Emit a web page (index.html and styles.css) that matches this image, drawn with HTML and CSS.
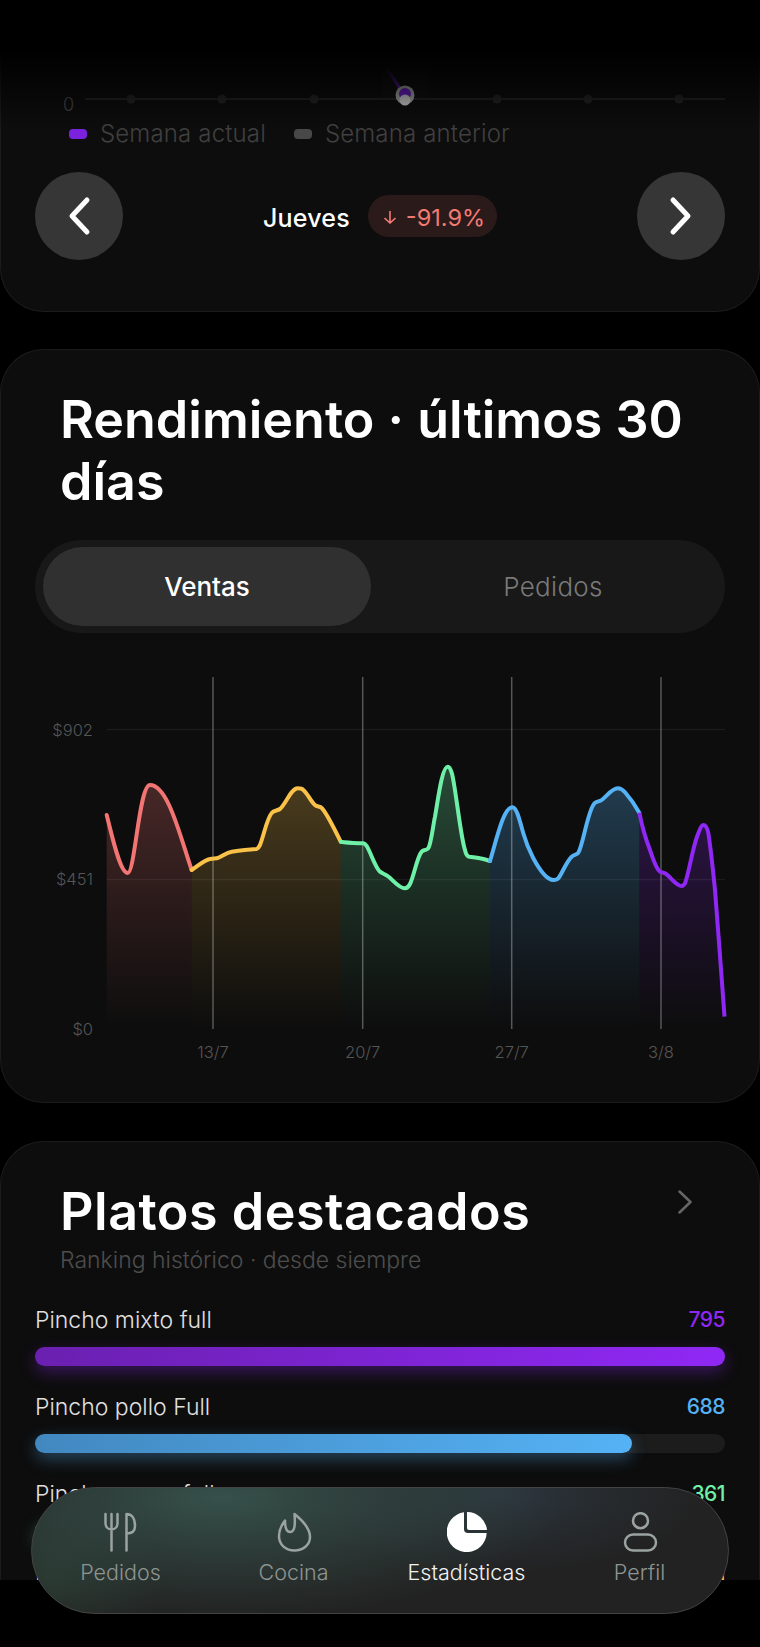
FILE: index.html
```html
<!DOCTYPE html>
<html lang="es">
<head>
  <meta charset="UTF-8">
  <meta name="viewport" content="width=device-width, initial-scale=1.0">
  <title>Estadísticas</title>
  <link rel="stylesheet" href="styles.css">
</head>
<body>
  <div class="screen">
    <section class="card card-week">
      <svg class="week-chart" viewBox="0 0 760 120" width="760" height="120">
        <defs>
          <linearGradient id="peakFade" x1="0" y1="0" x2="0" y2="1">
            <stop offset="0" stop-color="#6a20d0" stop-opacity="0"/>
            <stop offset="1" stop-color="#6a20d0"/>
          </linearGradient>
        </defs>
        <rect x="382" y="68" width="46" height="31" fill="#fff" opacity="0.015"/>
        <line x1="85" y1="99" x2="725" y2="99" stroke="#222" stroke-width="2"/>
        <g fill="#242424">
          <circle cx="131" cy="99" r="4.5"/>
          <circle cx="222" cy="99" r="4.5"/>
          <circle cx="314" cy="99" r="4.5"/>
          <circle cx="497" cy="99" r="4.5"/>
          <circle cx="588" cy="99" r="4.5"/>
          <circle cx="679" cy="99" r="4.5"/>
        </g>
        <path d="M386 67 L403 93" stroke="url(#peakFade)" stroke-width="3" fill="none"/>
        <circle cx="405" cy="95" r="9.5" fill="#a8a8a8"/>
        <circle cx="405" cy="94" r="6" fill="#6a20c8"/>
        <circle cx="405" cy="100" r="5.5" fill="#d0d0d0"/>
        <text class="week-zero" x="63" y="111">0</text>
      </svg>
      <div class="legend">
        <span class="legend-item"><i class="swatch swatch-now"></i>Semana actual</span>
        <span class="legend-item"><i class="swatch swatch-prev"></i>Semana anterior</span>
      </div>
      <div class="day-controls">
        <button class="round-btn">
          <svg viewBox="0 0 24 40" width="24" height="40"><path d="M20 4 L5 20 L20 36" /></svg>
        </button>
        <div class="day-info">
          <span class="day-name">Jueves</span>
          <span class="delta-pill">
            <svg viewBox="0 0 14 14" width="14" height="14"><path d="M7 1 V13 M1.5 8 L7 13 L12.5 8"/></svg>
            -91.9%
          </span>
        </div>
        <button class="round-btn">
          <svg viewBox="0 0 24 40" width="24" height="40"><path d="M4 4 L19 20 L4 36" /></svg>
        </button>
      </div>
    </section>

    <section class="card card-perf">
      <h2 class="card-title">Rendimiento · últimos 30 días</h2>
      <div class="toggle">
        <div class="toggle-btn active">Ventas</div>
        <div class="toggle-btn">Pedidos</div>
      </div>
      <svg class="sales-chart" viewBox="0 665 760 410" width="760" height="410">
        <defs>
          <linearGradient id="fadeRed" x1="0" y1="770" x2="0" y2="1029" gradientUnits="userSpaceOnUse">
            <stop offset="0" stop-color="#f27573" stop-opacity="0.27"/>
            <stop offset="1" stop-color="#f27573" stop-opacity="0"/>
          </linearGradient>
          <linearGradient id="fadeYellow" x1="0" y1="770" x2="0" y2="1029" gradientUnits="userSpaceOnUse">
            <stop offset="0" stop-color="#fbc24a" stop-opacity="0.27"/>
            <stop offset="1" stop-color="#fbc24a" stop-opacity="0"/>
          </linearGradient>
          <linearGradient id="fadeGreen" x1="0" y1="770" x2="0" y2="1029" gradientUnits="userSpaceOnUse">
            <stop offset="0" stop-color="#6ff0a8" stop-opacity="0.27"/>
            <stop offset="1" stop-color="#6ff0a8" stop-opacity="0"/>
          </linearGradient>
          <linearGradient id="fadeBlue" x1="0" y1="770" x2="0" y2="1029" gradientUnits="userSpaceOnUse">
            <stop offset="0" stop-color="#55b2f5" stop-opacity="0.3"/>
            <stop offset="1" stop-color="#55b2f5" stop-opacity="0"/>
          </linearGradient>
          <linearGradient id="fadePurple" x1="0" y1="770" x2="0" y2="1029" gradientUnits="userSpaceOnUse">
            <stop offset="0" stop-color="#9028f5" stop-opacity="0.28"/>
            <stop offset="1" stop-color="#9028f5" stop-opacity="0"/>
          </linearGradient>
        </defs>

        <!-- areas -->
        <path fill="url(#fadeRed)" d="M106.7 815 C112 836 120 873 127.7 873 C135 873 139 785 150 785 C168 785 180 836 191.7 870 V1029 H106.7 Z"/>
        <path fill="url(#fadeYellow)" d="M191.7 870 C198 866 204 860 210 859 C214 858 216 859 218.3 857.7 C224 855 227 852.5 231.7 851.7 C240 850.5 248 849.5 256.7 849 C258 848.5 259 847 260 845 C264 835 267 818 271.7 813 C274 810 277 811 280 809 C286 804 291 788.3 297.7 788.3 C300 788.3 302 788.5 303.3 790 C308 794 311 802 315 805 C317 807 320 806 321.7 808 C326 812 333 826 340.7 841.7 V1029 H191.7 Z"/>
        <path fill="url(#fadeGreen)" d="M340.7 841.7 C348 843 356 843 363.3 843.3 C365 843.5 366 845 366.7 846 C371 853 375 867 380 871.7 C383 874 385 874 388.3 876.5 C393 880 399 888.3 405 888.3 C407 888.3 409 886 410 884 C414 876 417 857 421.7 851.7 C424 849 426 851 428.3 848.3 C431 844 433 826 435 816.7 C438 800 442 766.7 447.7 766.7 C450 766.7 452 772 453.3 780 C457 800 461 838 465 850 C466 855 467 856.3 469.3 856.7 C473 857 476 857.3 480 858.3 C484 859 487 860 490 861 V1029 H340.7 Z"/>
        <path fill="url(#fadeBlue)" d="M490 861 C496 842 503 807.3 512.3 807.3 C517 807.3 520 822 523.3 833.3 C526 843 530 852 533.3 858.3 C538 867 546 880 553.3 880 C555 880 557 880 558.3 878.3 C562 874 566 862 571.7 856.7 C574 854 577 855 578.3 852.7 C583 845 587 815 593.3 805 C595 801 599 802 601.7 800 C607 796 612 788.3 617.7 788.3 C620 788.3 623 790 625 792.3 C630 798 635 805 639.3 812.7 V1029 H490 Z"/>
        <path fill="url(#fadePurple)" d="M639.3 812.7 C642 826 646 840 650 850 C653 859 656 869 660 871.7 C662 873 663 872 665 873.3 C670 876 676 886 681.7 886 C683 886 684 885 685 883.3 C689 873 693 845 698.3 833.3 C700 829 701.5 825 703.3 825 C705.5 825 707 827 708.3 833 C711 850 713 870 715 890 C718 930 722 980 725 1016.7 V1029 H639.3 Z"/>

        <!-- grid -->
        <g stroke="#fff" stroke-opacity="0.06" stroke-width="1.5">
          <line x1="106.7" y1="729.5" x2="725" y2="729.5"/>
          <line x1="106.7" y1="879.5" x2="725" y2="879.5"/>
        </g>
        <g stroke="#fff" stroke-opacity="0.3" stroke-width="1.5">
          <line x1="213" y1="677" x2="213" y2="1029"/>
          <line x1="362.7" y1="677" x2="362.7" y2="1029"/>
          <line x1="511.7" y1="677" x2="511.7" y2="1029"/>
          <line x1="661" y1="677" x2="661" y2="1029"/>
        </g>

        <!-- lines -->
        <g fill="none" stroke-width="4" stroke-linecap="round" stroke-linejoin="round">
          <path stroke="#f27573" d="M106.7 815 C112 836 120 873 127.7 873 C135 873 139 785 150 785 C168 785 180 836 191.7 870"/>
          <path stroke="#fbc24a" d="M191.7 870 C198 866 204 860 210 859 C214 858 216 859 218.3 857.7 C224 855 227 852.5 231.7 851.7 C240 850.5 248 849.5 256.7 849 C258 848.5 259 847 260 845 C264 835 267 818 271.7 813 C274 810 277 811 280 809 C286 804 291 788.3 297.7 788.3 C300 788.3 302 788.5 303.3 790 C308 794 311 802 315 805 C317 807 320 806 321.7 808 C326 812 333 826 340.7 841.7"/>
          <path stroke="#6ff0a8" d="M340.7 841.7 C348 843 356 843 363.3 843.3 C365 843.5 366 845 366.7 846 C371 853 375 867 380 871.7 C383 874 385 874 388.3 876.5 C393 880 399 888.3 405 888.3 C407 888.3 409 886 410 884 C414 876 417 857 421.7 851.7 C424 849 426 851 428.3 848.3 C431 844 433 826 435 816.7 C438 800 442 766.7 447.7 766.7 C450 766.7 452 772 453.3 780 C457 800 461 838 465 850 C466 855 467 856.3 469.3 856.7 C473 857 476 857.3 480 858.3 C484 859 487 860 490 861"/>
          <path stroke="#55b2f5" d="M490 861 C496 842 503 807.3 512.3 807.3 C517 807.3 520 822 523.3 833.3 C526 843 530 852 533.3 858.3 C538 867 546 880 553.3 880 C555 880 557 880 558.3 878.3 C562 874 566 862 571.7 856.7 C574 854 577 855 578.3 852.7 C583 845 587 815 593.3 805 C595 801 599 802 601.7 800 C607 796 612 788.3 617.7 788.3 C620 788.3 623 790 625 792.3 C630 798 635 805 639.3 812.7"/>
          <path stroke="#9028f5" stroke-linecap="butt" d="M639.3 812.7 C642 826 646 840 650 850 C653 859 656 869 660 871.7 C662 873 663 872 665 873.3 C670 876 676 886 681.7 886 C683 886 684 885 685 883.3 C689 873 693 845 698.3 833.3 C700 829 701.5 825 703.3 825 C705.5 825 707 827 708.3 833 C711 850 713 870 715 890 C718 930 722 980 724.5 1016.7"/>
        </g>

        <!-- labels -->
        <g class="axis-label">
          <text x="93" y="736" text-anchor="end">$902</text>
          <text x="93" y="885" text-anchor="end">$451</text>
          <text x="93" y="1035" text-anchor="end">$0</text>
          <text x="213" y="1058" text-anchor="middle">13/7</text>
          <text x="362.7" y="1058" text-anchor="middle">20/7</text>
          <text x="511.7" y="1058" text-anchor="middle">27/7</text>
          <text x="661" y="1058" text-anchor="middle">3/8</text>
        </g>
      </svg>
    </section>

    <section class="card card-top">
      <div class="top-head">
        <div>
          <h2 class="card-title">Platos destacados</h2>
          <p class="top-sub">Ranking histórico · desde siempre</p>
        </div>
        <svg class="top-chevron" viewBox="0 0 14 24" width="14" height="24"><path d="M1.5 1.5 L12.5 12 L1.5 22.5"/></svg>
      </div>
      <div class="dish">
        <div class="dish-row"><span>Pincho mixto full</span><b class="c-purple">795</b></div>
        <div class="track"><div class="fill fill-purple" style="width: 100%"></div></div>
      </div>
      <div class="dish">
        <div class="dish-row"><span>Pincho pollo Full</span><b class="c-blue">688</b></div>
        <div class="track"><div class="fill fill-blue" style="width: 86.5%"></div></div>
      </div>
      <div class="dish">
        <div class="dish-row"><span>Pincho carne full</span><b class="c-green">361</b></div>
        <div class="track"><div class="fill fill-green" style="width: 45.4%"></div></div>
      </div>
      <div class="dish">
        <div class="dish-row"><span>Lomito full</span><b class="c-yellow">311</b></div>
      </div>
    </section>
    <div class="top-fade"></div>
  </div>

  <nav class="tabbar">
    <div class="tab">
      <svg viewBox="0 0 40 40" width="40" height="40"><path d="M4.5 2 V11 C4.5 15 7 17.5 10.5 17.5 C14 17.5 16.5 15 16.5 11 V2 M10.5 2 V38.5 M25.5 38.5 V2 C30 2 34 5.5 34 14 C34 19.5 31 21.5 25.5 21.5"/></svg>
      <span>Pedidos</span>
    </div>
    <div class="tab">
      <svg viewBox="0 0 40 40" width="40" height="40"><path d="M20.5 2 C28 8 36 16 36 25 C36 33 29 38.5 20.5 38.5 C12 38.5 5 33 5 24 C5 18 7.5 13 11 8.5 C11 14 12 20 16 20 C20.5 20 21.5 14 20.5 2 Z"/></svg>
      <span>Cocina</span>
    </div>
    <div class="tab active">
      <svg viewBox="0 0 40 40" width="40" height="40"><path class="solid" d="M17 0.3 V17 a4 4 0 0 0 4 4 H39.7 A20 20 0 1 1 17 0.3 Z"/><path class="solid" d="M20 0 A20 20 0 0 1 40 18 H22 a2 2 0 0 1 -2 -2 Z"/></svg>
      <span>Estadísticas</span>
    </div>
    <div class="tab">
      <svg viewBox="0 0 40 40" width="40" height="40"><circle cx="20.5" cy="8.7" r="7.5"/><rect x="5" y="22.5" width="31" height="16" rx="8"/></svg>
      <span>Perfil</span>
    </div>
  </nav>
</body>
</html>
```

FILE: styles.css
```css
* {
  margin: 0;
  padding: 0;
  box-sizing: border-box;
}

body {
  font-family: 'Inter', 'Liberation Sans', sans-serif;
  font-weight: 300;
  background: #000;
  color: #fff;
  width: 760px;
  height: 1647px;
  overflow: hidden;
  position: relative;
}

.screen {
  height: 1580px;
  overflow: hidden;
  position: relative;
  display: flex;
  flex-direction: column;
  gap: 37px;
}

.card {
  flex: none;
  background: #0d0d0d;
  border-radius: 44px;
  box-shadow: inset 0 0 0 1px #1b1b1b;
}

.top-fade {
  position: absolute;
  top: 0;
  left: 0;
  right: 0;
  height: 130px;
  background: linear-gradient(#000 0, #000 50px, rgba(0, 0, 0, 0) 130px);
}

/* week card */
.card-week {
  height: 312px;
  border-radius: 0 0 44px 44px;
}

.week-chart {
  display: block;
}

.week-zero {
  font-size: 18px;
  fill: #4a4a4a;
}

.legend {
  display: flex;
  gap: 28px;
  padding-left: 69px;
  font-size: 24px;
  letter-spacing: 0.15px;
  line-height: 28px;
  color: #404040;
}

.legend-item {
  display: flex;
  align-items: center;
  gap: 13px;
}

.swatch {
  width: 18px;
  height: 10px;
  border-radius: 4px;
}

.swatch-now {
  background: #7b22dc;
}

.swatch-prev {
  background: #484848;
}

.day-controls {
  display: flex;
  align-items: center;
  justify-content: space-between;
  margin-top: 24px;
  padding: 0 35px;
}

.round-btn {
  width: 88px;
  height: 88px;
  border: none;
  border-radius: 50%;
  background: #363636;
  display: flex;
  align-items: center;
  justify-content: center;
}

.round-btn path {
  fill: none;
  stroke: #fff;
  stroke-width: 5;
  stroke-linecap: round;
  stroke-linejoin: round;
}

.day-info {
  display: flex;
  align-items: center;
  gap: 18px;
}

.day-name {
  padding-top: 3px;
  font-size: 25px;
  font-weight: 500;
  letter-spacing: 0.2px;
}

.delta-pill {
  display: flex;
  align-items: center;
  gap: 9px;
  height: 42px;
  padding: 2px 12px 0 15px;
  border-radius: 21px;
  background: #2b1a1a;
  color: #f27b74;
  font-size: 23.5px;
  font-weight: 400;
}

.delta-pill path {
  fill: none;
  stroke: #f27b74;
  stroke-width: 1.6;
}

/* titles */
.card-title {
  font-size: 52px;
  font-weight: 600;
  line-height: 62px;
}

/* performance card */
.card-perf {
  height: 754px;
  margin-bottom: 1px;
  padding-top: 40px;
}

.card-perf .card-title {
  padding: 0 60px;
}

.toggle {
  display: flex;
  gap: 18px;
  height: 93px;
  margin: 27px 35px 0;
  padding: 7px 8px;
  border-radius: 47px;
  background: #181818;
}

.toggle-btn {
  flex: 1;
  display: flex;
  align-items: center;
  justify-content: center;
  border-radius: 40px;
  font-size: 26px;
  letter-spacing: 0.3px;
  color: #7a7a7a;
}

.toggle-btn.active {
  background: #303030;
  color: #fff;
  font-weight: 500;
  letter-spacing: 0;
}

.sales-chart {
  display: block;
  margin-top: 32px;
}

.axis-label {
  font-size: 16.5px;
  fill: #555;
}

/* ranking card */
.card-top {
  height: 500px;
  padding: 40px 35px 0;
}

.top-head {
  display: flex;
  justify-content: space-between;
  align-items: flex-start;
  padding: 0 33px 0 25px;
}

.card-top .card-title {
  letter-spacing: 0.5px;
}

.top-sub {
  margin-top: 3px;
  font-size: 23px;
  line-height: 28px;
  color: #4d4d4d;
}

.top-chevron {
  margin-top: 9px;
}

.top-chevron path {
  fill: none;
  stroke: #666;
  stroke-width: 2.5;
  stroke-linecap: round;
  stroke-linejoin: round;
}

.dish {
  margin-top: 27px;
}

.top-head + .dish {
  margin-top: 32px;
}

.dish-row {
  display: flex;
  justify-content: space-between;
  font-size: 23px;
  line-height: 28px;
  color: #e0e0e0;
}

.dish-row b {
  font-size: 21px;
  font-weight: 500;
  letter-spacing: -0.5px;
}

.c-purple { color: #9028f5; }
.c-blue { color: #55b2f5; }
.c-green { color: #6ff0a8; }
.c-yellow { color: #fbc24a; }

.track {
  height: 19px;
  margin-top: 13px;
  border-radius: 10px;
  background: #1c1c1c;
}

.fill {
  height: 100%;
  border-radius: 10px;
}

.fill-purple {
  background: linear-gradient(90deg, #6a20b0, #9028f5);
  box-shadow: 0 6px 16px rgba(144, 40, 245, 0.35);
}

.fill-blue {
  background: linear-gradient(90deg, #4288c0, #55b2f5);
  box-shadow: 0 6px 16px rgba(85, 178, 245, 0.35);
}

.fill-green {
  background: linear-gradient(90deg, #4fb57e, #6ff0a8);
  box-shadow: 0 6px 16px rgba(111, 240, 168, 0.35);
}

/* bottom nav */
.tabbar {
  position: absolute;
  left: 31px;
  top: 1487px;
  width: 698px;
  height: 127px;
  padding: 24px 2px 0;
  display: grid;
  grid-template-columns: repeat(4, 1fr);
  border: 1.5px solid #434343;
  border-radius: 64px;
  background:
    radial-gradient(ellipse 340px 120px at 190px 10px, #36504a 0%, rgba(54, 80, 74, 0) 100%),
    radial-gradient(ellipse 200px 80px at 470px 5px, #2b343c 0%, rgba(43, 52, 60, 0) 100%),
    radial-gradient(ellipse 110px 100px at 20px 90px, #29362f 0%, rgba(41, 54, 47, 0) 100%),
    #222;
}

.tab {
  display: flex;
  flex-direction: column;
  align-items: center;
  gap: 6px;
  font-size: 21.5px;
  line-height: 28px;
  color: #8d9592;
}

.tab svg > * {
  fill: none;
  stroke: #9aa3a0;
  stroke-width: 2.5;
  stroke-linecap: round;
  stroke-linejoin: round;
}

.tab.active {
  color: #f2f2f2;
}

.tab svg > .solid {
  fill: #fff;
  stroke: none;
}
```
